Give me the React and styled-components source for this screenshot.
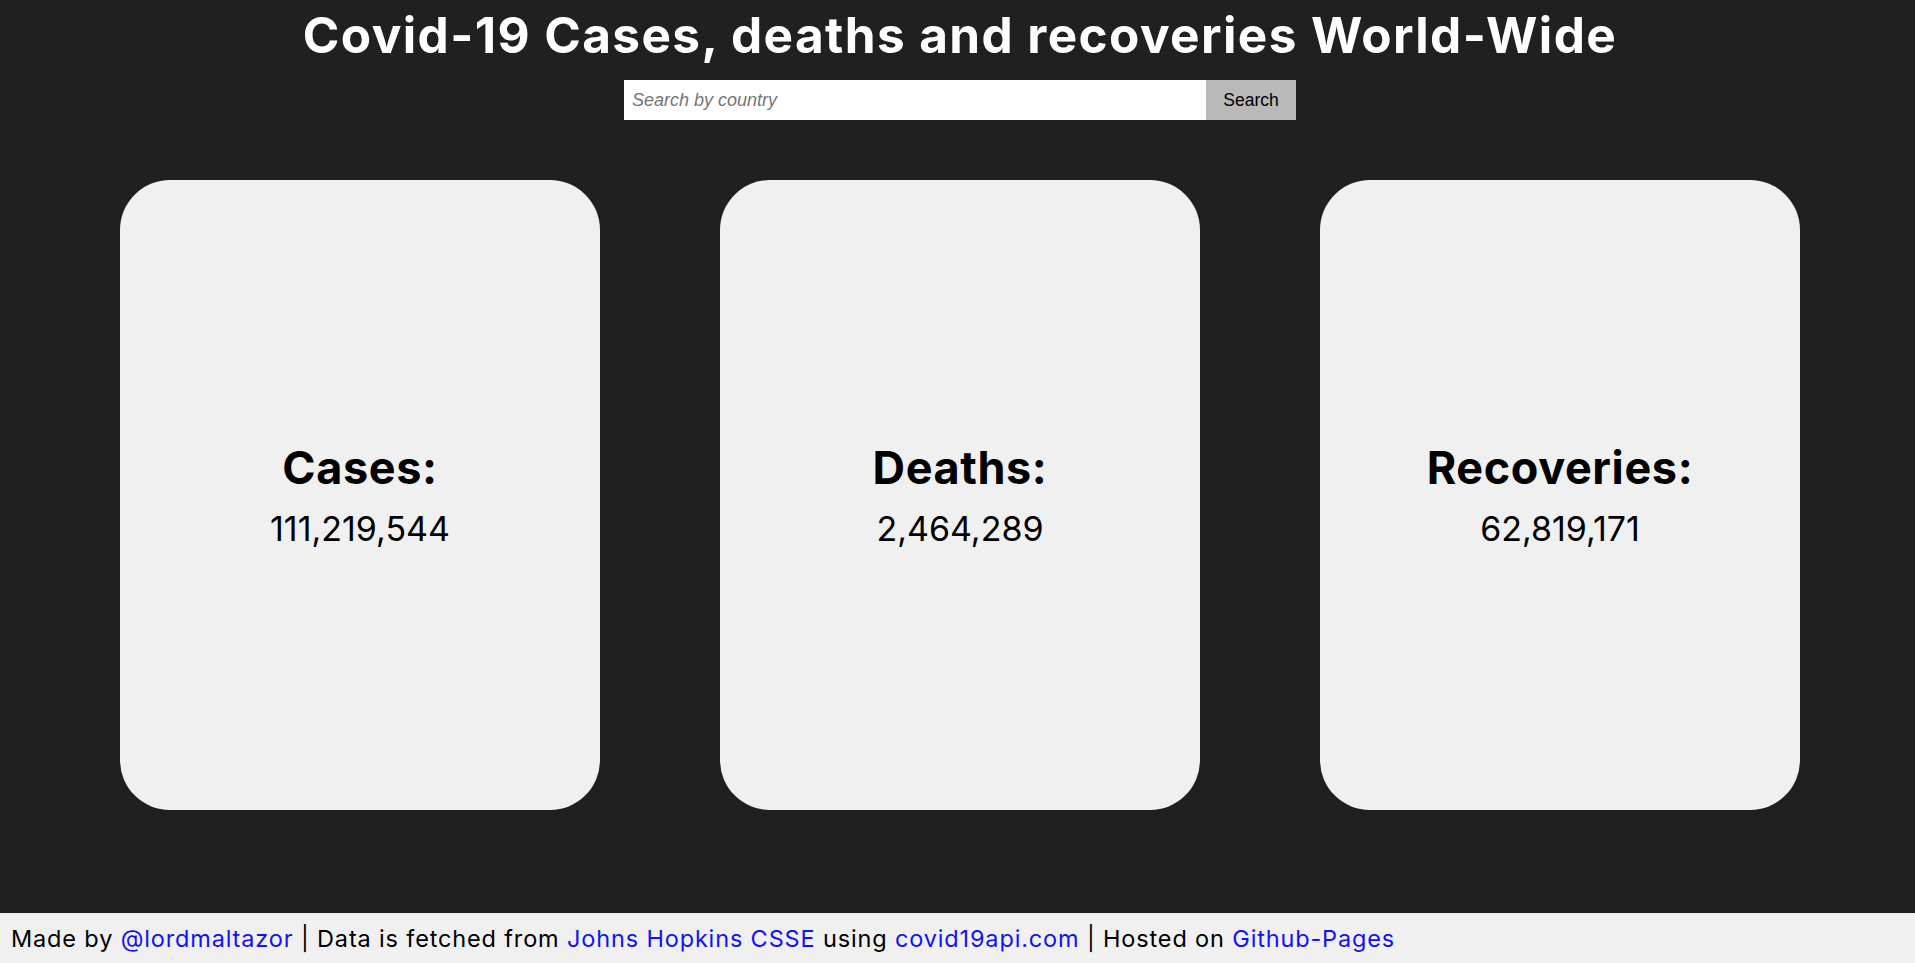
import React from "react";
import styled, { createGlobalStyle } from "styled-components";

const GlobalStyle = createGlobalStyle`
  html, body { margin: 0; padding: 0; }
  body {
    background: #202020;
    font-family: Inter, "Liberation Sans", sans-serif;
  }
`;

const Page = styled.div`
  min-height: 100vh;
  display: flex;
  flex-direction: column;
  align-items: stretch;
`;

const Header = styled.header`
  display: flex;
  flex-direction: column;
  align-items: center;
  padding-top: 5px;
  padding-left: 5px;
`;

const Title = styled.h1`
  margin: 0;
  font-family: Inter, sans-serif;
  font-weight: 700;
  font-size: 49.5px;
  line-height: 60px;
  letter-spacing: 1.4px;
  color: #ffffff;
  text-align: center;
`;

const SearchForm = styled.form`
  display: flex;
  margin-top: 15px;
  height: 40px;
`;

const SearchInput = styled.input`
  width: 582px;
  box-sizing: border-box;
  border: none;
  outline: none;
  padding: 0 8px;
  background: #ffffff;
  font-family: "Liberation Sans", Arial, sans-serif;
  font-size: 18px;
  &::placeholder {
    color: #757575;
    font-style: italic;
  }
`;

const SearchButton = styled.button`
  width: 90px;
  border: none;
  background: #b9b9b9;
  color: #000;
  font-family: "Liberation Sans", Arial, sans-serif;
  font-size: 17.5px;
  padding: 0;
  cursor: pointer;
`;

const CardRow = styled.main`
  display: flex;
  gap: 120px;
  padding: 0 120px;
  margin-top: 60px;
  margin-bottom: 40px;
`;

const Card = styled.section`
  width: 480px;
  height: 630px;
  flex: none;
  background: #f0f0f0;
  border-radius: 50px;
  display: flex;
  flex-direction: column;
  align-items: center;
  justify-content: center;
  gap: 13px;
  color: #000;
`;

const CardLabel = styled.h2`
  margin: 0;
  font-family: Inter, sans-serif;
  font-weight: 700;
  font-size: 45px;
  line-height: 54px;
  letter-spacing: 0.6px;
`;

const CardValue = styled.p`
  margin: 0;
  font-family: Inter, sans-serif;
  font-weight: 400;
  font-size: 34px;
  line-height: 41.4px;
`;

const Footer = styled.footer`
  margin-top: auto;
  height: 50px;
  background: #f0f0f0;
  display: flex;
  align-items: center;
  padding: 0 11px;
  font-family: Inter, sans-serif;
  font-size: 23.5px;
  letter-spacing: 0.85px;
  color: #000;
  white-space: nowrap;
`;

const Link = styled.a`
  color: #1010ff;
  text-decoration: none;
`;

const stats = [
  { label: "Cases:", value: "111,219,544" },
  { label: "Deaths:", value: "2,464,289" },
  { label: "Recoveries:", value: "62,819,171" },
];

export default function App() {
  return (
    <Page>
      <GlobalStyle />
      <Header>
        <Title>Covid-19 Cases, deaths and recoveries World-Wide</Title>
        <SearchForm onSubmit={(e) => e.preventDefault()}>
          <SearchInput type="text" placeholder="Search by country" />
          <SearchButton type="submit">Search</SearchButton>
        </SearchForm>
      </Header>
      <CardRow>
        {stats.map((s) => (
          <Card key={s.label}>
            <CardLabel>{s.label}</CardLabel>
            <CardValue>{s.value}</CardValue>
          </Card>
        ))}
      </CardRow>
      <Footer>
        <span>
          Made by <Link href="#">@lordmaltazor</Link> | Data is fetched from{" "}
          <Link href="#">Johns Hopkins CSSE</Link> using{" "}
          <Link href="#">covid19api.com</Link> | Hosted on{" "}
          <Link href="#">Github-Pages</Link>
        </span>
      </Footer>
    </Page>
  );
}
